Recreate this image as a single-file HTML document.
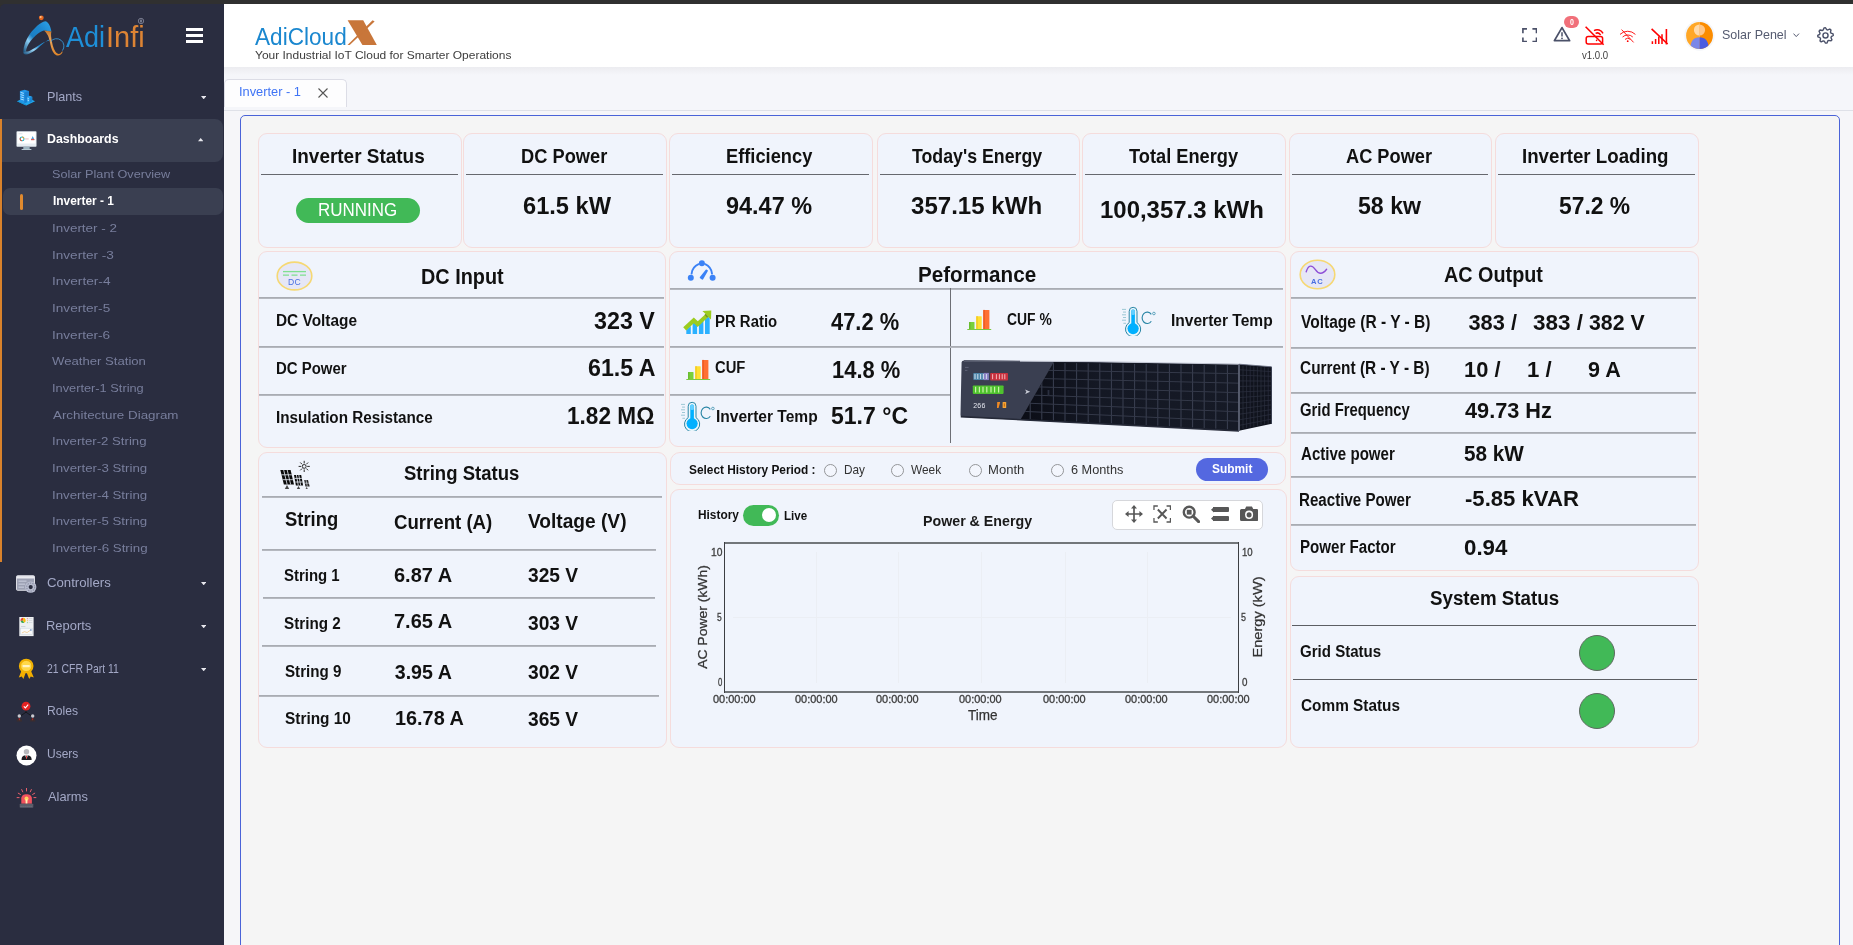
<!DOCTYPE html>
<html lang="en"><head><meta charset="utf-8"><title>Inverter - 1</title><style>html,body{margin:0;padding:0;overflow:hidden}html{width:1853px;height:945px}body{width:1853px;height:945px;overflow:hidden;position:relative;background:#f5f6fa;font-family:"Liberation Sans",sans-serif}
.a{position:absolute;display:block}
.t{position:absolute;white-space:nowrap;line-height:1;font-family:"Liberation Sans",sans-serif;transform-origin:0 0}
</style></head>
<body>
<div class="a" style="left:0;top:0;width:1853px;height:945px;overflow:hidden;will-change:transform">
<div class="a" style="left:0px;top:0px;width:1853px;height:945px;background:#f5f6fa;"></div>
<div class="a" style="left:0px;top:0px;width:1853px;height:4px;background:#303030;"></div>
<div class="a" style="left:224px;top:4px;width:1629px;height:63px;background:#ffffff;"></div>
<div class="a" style="left:224px;top:67px;width:1629px;height:8px;background:linear-gradient(#ececf0,#f5f6fa);"></div>
<div class="a" style="left:224px;top:110px;width:1629px;height:1px;background:#dfe1e8;"></div>
<div class="a" style="left:224px;top:111px;width:1629px;height:834px;background:#f6f6f9;"></div>
<div class="a" style="left:224px;top:79px;width:123px;height:28px;background:#fdfdfe;border:1px solid #dcdde6;box-sizing:border-box;border-radius:5px 5px 0 0;border-bottom:none;"></div>
<span class="t" style="left:239.10px;top:85.70px;font-size:12px;font-weight:400;color:#3f74f5;transform:scaleX(1.0679);">Inverter - 1</span>
<svg class="a" style="left:318px;top:88px;" width="10" height="10" viewBox="0 0 10 10" preserveAspectRatio="none"><path d="M0.5 0.5L9.5 9.5M9.5 0.5L0.5 9.5" stroke="#555" stroke-width="1.1" fill="none"/></svg>
<div class="a" style="left:240px;top:115px;width:1600px;height:845px;background:#f5f5f5;border:1px solid #4a63d8;box-sizing:border-box;border-radius:5px 5px 0 0;"></div>
<div class="a" style="left:0px;top:4px;width:12px;height:8px;background:#303030;"></div>
<div class="a" style="left:0px;top:4px;width:224px;height:941px;background:#2a2d40;border-radius:5px 0 0 0;"></div>
<div class="a" style="left:0px;top:119px;width:2px;height:443px;background:#d9822b;"></div>
<div class="a" style="left:2px;top:119px;width:221px;height:43px;background:#3a3f51;border-radius:0 8px 8px 0;"></div>
<div class="a" style="left:3px;top:188px;width:220px;height:27px;background:#3a3f51;border-radius:7px;"></div>
<div class="a" style="left:20px;top:194px;width:3px;height:16px;background:#e08a2e;border-radius:2px;"></div>
<span class="t" style="left:47.00px;top:92.48px;font-size:11.9px;font-weight:400;color:#a3a8c6;transform:scaleX(1.0625);">Plants</span>
<span class="t" style="left:46.93px;top:132.73px;font-size:12.2px;font-weight:700;color:#ffffff;transform:scaleX(1.0159);">Dashboards</span>
<span class="t" style="left:52.38px;top:168.97px;font-size:11.8px;font-weight:400;color:#787e9c;transform:scaleX(1.0734);">Solar Plant Overview</span>
<span class="t" style="left:52.58px;top:194.80px;font-size:12.0px;font-weight:700;color:#ffffff;transform:scaleX(0.9917);">Inverter - 1</span>
<span class="t" style="left:51.51px;top:222.97px;font-size:11.8px;font-weight:400;color:#787e9c;transform:scaleX(1.1382);">Inverter - 2</span>
<span class="t" style="left:51.76px;top:249.97px;font-size:11.8px;font-weight:400;color:#787e9c;transform:scaleX(1.1500);">Inverter -3</span>
<span class="t" style="left:51.68px;top:275.97px;font-size:11.8px;font-weight:400;color:#787e9c;transform:scaleX(1.1592);">Inverter-4</span>
<span class="t" style="left:51.86px;top:302.97px;font-size:11.8px;font-weight:400;color:#787e9c;transform:scaleX(1.1531);">Inverter-5</span>
<span class="t" style="left:52.07px;top:329.97px;font-size:11.8px;font-weight:400;color:#787e9c;transform:scaleX(1.1510);">Inverter-6</span>
<span class="t" style="left:52.42px;top:355.97px;font-size:11.8px;font-weight:400;color:#787e9c;transform:scaleX(1.1131);">Weather Station</span>
<span class="t" style="left:52.44px;top:382.97px;font-size:11.8px;font-weight:400;color:#787e9c;transform:scaleX(1.0843);">Inverter-1 String</span>
<span class="t" style="left:53.34px;top:409.97px;font-size:11.8px;font-weight:400;color:#787e9c;transform:scaleX(1.1327);">Architecture Diagram</span>
<span class="t" style="left:52.13px;top:435.97px;font-size:11.8px;font-weight:400;color:#787e9c;transform:scaleX(1.1169);">Inverter-2 String</span>
<span class="t" style="left:52.31px;top:462.97px;font-size:11.8px;font-weight:400;color:#787e9c;transform:scaleX(1.1253);">Inverter-3 String</span>
<span class="t" style="left:52.31px;top:489.97px;font-size:11.8px;font-weight:400;color:#787e9c;transform:scaleX(1.1253);">Inverter-4 String</span>
<span class="t" style="left:52.31px;top:515.97px;font-size:11.8px;font-weight:400;color:#787e9c;transform:scaleX(1.1253);">Inverter-5 String</span>
<span class="t" style="left:52.12px;top:542.97px;font-size:11.8px;font-weight:400;color:#787e9c;transform:scaleX(1.1301);">Inverter-6 String</span>
<span class="t" style="left:46.67px;top:578.28px;font-size:11.9px;font-weight:400;color:#a3a8c6;transform:scaleX(1.1089);">Controllers</span>
<span class="t" style="left:46.33px;top:621.28px;font-size:11.9px;font-weight:400;color:#a3a8c6;transform:scaleX(1.0875);">Reports</span>
<span class="t" style="left:47.03px;top:664.28px;font-size:11.9px;font-weight:400;color:#a3a8c6;transform:scaleX(0.8790);">21 CFR Part 11</span>
<span class="t" style="left:46.62px;top:706.28px;font-size:11.9px;font-weight:400;color:#a3a8c6;transform:scaleX(1.0207);">Roles</span>
<span class="t" style="left:47.08px;top:749.28px;font-size:11.9px;font-weight:400;color:#a3a8c6;transform:scaleX(1.0083);">Users</span>
<span class="t" style="left:48.12px;top:792.28px;font-size:11.9px;font-weight:400;color:#a3a8c6;transform:scaleX(1.0811);">Alarms</span>
<svg class="a" style="left:200.6px;top:95.7px;" width="5.4" height="3.3" viewBox="0 0 6 3.5" preserveAspectRatio="none"><path d="M0 0H6L3 3.5Z" fill="#e8e8ee"/></svg>
<svg class="a" style="left:198.0px;top:138.3px;" width="5.4" height="3.3" viewBox="0 0 6 3.5" preserveAspectRatio="none"><path d="M0 3.5H6L3 0Z" fill="#e8e8ee"/></svg>
<svg class="a" style="left:200.6px;top:582.0px;" width="5.4" height="3.3" viewBox="0 0 6 3.5" preserveAspectRatio="none"><path d="M0 0H6L3 3.5Z" fill="#e8e8ee"/></svg>
<svg class="a" style="left:200.6px;top:625.0px;" width="5.4" height="3.3" viewBox="0 0 6 3.5" preserveAspectRatio="none"><path d="M0 0H6L3 3.5Z" fill="#e8e8ee"/></svg>
<svg class="a" style="left:200.6px;top:667.8px;" width="5.4" height="3.3" viewBox="0 0 6 3.5" preserveAspectRatio="none"><path d="M0 0H6L3 3.5Z" fill="#e8e8ee"/></svg>
<div class="a" style="left:186px;top:28px;width:17px;height:3px;background:#ffffff;"></div>
<div class="a" style="left:186px;top:33.8px;width:17px;height:3.0px;background:#ffffff;"></div>
<div class="a" style="left:186px;top:39.5px;width:17px;height:3.0px;background:#ffffff;"></div>
<div class="a" style="left:258px;top:133px;width:204px;height:115px;background:#f0f4fc;border:1px solid #f5dcdc;box-sizing:border-box;border-radius:9px;"></div>
<div class="a" style="left:261px;top:174px;width:197px;height:1px;background:#66686e;"></div>
<span class="t" style="left:292.25px;top:145.74px;font-size:20.6px;font-weight:700;color:#111111;transform:scaleX(0.9201);">Inverter Status</span>
<div class="a" style="left:463px;top:133px;width:204px;height:115px;background:#f0f4fc;border:1px solid #f5dcdc;box-sizing:border-box;border-radius:9px;"></div>
<div class="a" style="left:466px;top:174px;width:197px;height:1px;background:#66686e;"></div>
<span class="t" style="left:520.59px;top:145.74px;font-size:20.6px;font-weight:700;color:#111111;transform:scaleX(0.8870);">DC Power</span>
<span class="t" style="left:523.12px;top:194.43px;font-size:24.2px;font-weight:700;color:#111111;transform:scaleX(0.9764);">61.5 kW</span>
<div class="a" style="left:669px;top:133px;width:204px;height:115px;background:#f0f4fc;border:1px solid #f5dcdc;box-sizing:border-box;border-radius:9px;"></div>
<div class="a" style="left:672px;top:174px;width:197px;height:1px;background:#66686e;"></div>
<span class="t" style="left:725.84px;top:145.74px;font-size:20.6px;font-weight:700;color:#111111;transform:scaleX(0.8870);">Efficiency</span>
<span class="t" style="left:725.77px;top:194.43px;font-size:24.2px;font-weight:700;color:#111111;transform:scaleX(0.9701);">94.47 %</span>
<div class="a" style="left:877px;top:133px;width:203px;height:115px;background:#f0f4fc;border:1px solid #f5dcdc;box-sizing:border-box;border-radius:9px;"></div>
<div class="a" style="left:880px;top:174px;width:196px;height:1px;background:#66686e;"></div>
<span class="t" style="left:911.76px;top:145.74px;font-size:20.6px;font-weight:700;color:#111111;transform:scaleX(0.8619);">Today&#x27;s Energy</span>
<span class="t" style="left:911.09px;top:194.43px;font-size:24.2px;font-weight:700;color:#111111;transform:scaleX(0.9953);">357.15 kWh</span>
<div class="a" style="left:1082px;top:133px;width:204px;height:115px;background:#f0f4fc;border:1px solid #f5dcdc;box-sizing:border-box;border-radius:9px;"></div>
<div class="a" style="left:1085px;top:174px;width:197px;height:1px;background:#66686e;"></div>
<span class="t" style="left:1128.75px;top:145.74px;font-size:20.6px;font-weight:700;color:#111111;transform:scaleX(0.8854);">Total Energy</span>
<span class="t" style="left:1100.20px;top:198.43px;font-size:24.2px;font-weight:700;color:#111111;transform:scaleX(0.9902);">100,357.3 kWh</span>
<div class="a" style="left:1289px;top:133px;width:203px;height:115px;background:#f0f4fc;border:1px solid #f5dcdc;box-sizing:border-box;border-radius:9px;"></div>
<div class="a" style="left:1292px;top:174px;width:196px;height:1px;background:#66686e;"></div>
<span class="t" style="left:1345.74px;top:145.74px;font-size:20.6px;font-weight:700;color:#111111;transform:scaleX(0.8844);">AC Power</span>
<span class="t" style="left:1357.64px;top:194.43px;font-size:24.2px;font-weight:700;color:#111111;transform:scaleX(0.9562);">58 kw</span>
<div class="a" style="left:1495px;top:133px;width:203.5px;height:115px;background:#f0f4fc;border:1px solid #f5dcdc;box-sizing:border-box;border-radius:9px;"></div>
<div class="a" style="left:1498px;top:174px;width:196.5px;height:1px;background:#66686e;"></div>
<span class="t" style="left:1522.11px;top:145.74px;font-size:20.6px;font-weight:700;color:#111111;transform:scaleX(0.9082);">Inverter Loading</span>
<span class="t" style="left:1558.92px;top:194.43px;font-size:24.2px;font-weight:700;color:#111111;transform:scaleX(0.9446);">57.2 %</span>
<div class="a" style="left:296px;top:198px;width:124px;height:25px;background:#41b957;border-radius:13px;"></div>
<span class="t" style="left:318.12px;top:201.44px;font-size:18.6px;font-weight:400;color:#ffffff;transform:scaleX(0.9125);">RUNNING</span>
<div class="a" style="left:258px;top:251px;width:408px;height:196.5px;background:#f0f4fc;border:1px solid #f5dcdc;box-sizing:border-box;border-radius:9px;"></div>
<svg class="a" style="left:276px;top:261px;" width="37" height="30" viewBox="0 0 37 30" preserveAspectRatio="none"><ellipse cx="18.5" cy="15" rx="17.3" ry="13.9" fill="#e6e7f6" stroke="#f6d873" stroke-width="1.6"/>
<path d="M7 10.6H30" stroke="#7fe08f" stroke-width="1.3"/><path d="M7 14.2h6M15.5 14.2h6M24 14.2h6" stroke="#7fe08f" stroke-width="1.3"/>
<text x="18.5" y="24.3" font-family="Liberation Sans" font-size="8.6" font-weight="400" fill="#4a6fe0" text-anchor="middle" letter-spacing="0.4">DC</text></svg>
<span class="t" style="left:420.56px;top:266.04px;font-size:22.6px;font-weight:700;color:#111111;transform:scaleX(0.8780);">DC Input</span>
<div class="a" style="left:259px;top:297px;width:405px;height:2px;background:linear-gradient(#a3a6ad,#bbbec5);"></div>
<span class="t" style="left:275.96px;top:312.46px;font-size:17.4px;font-weight:700;color:#111111;transform:scaleX(0.8850);">DC Voltage</span>
<span class="t" style="left:593.94px;top:308.60px;font-size:24.3px;font-weight:700;color:#111111;transform:scaleX(0.9581);">323 V</span>
<div class="a" style="left:259px;top:346px;width:405px;height:2px;background:linear-gradient(#a3a6ad,#bbbec5);"></div>
<span class="t" style="left:276.12px;top:360.46px;font-size:17.4px;font-weight:700;color:#111111;transform:scaleX(0.8599);">DC Power</span>
<span class="t" style="left:587.59px;top:356.10px;font-size:24.3px;font-weight:700;color:#111111;transform:scaleX(0.9551);">61.5 A</span>
<div class="a" style="left:259px;top:393.5px;width:405px;height:2.0px;background:linear-gradient(#a3a6ad,#bbbec5);"></div>
<span class="t" style="left:275.83px;top:409.46px;font-size:17.4px;font-weight:700;color:#111111;transform:scaleX(0.8766);">Insulation Resistance</span>
<span class="t" style="left:567.29px;top:403.60px;font-size:24.3px;font-weight:700;color:#111111;transform:scaleX(0.9310);">1.82 MΩ</span>
<div class="a" style="left:258px;top:451.5px;width:408.5px;height:296.0px;background:#f0f4fc;border:1px solid #f5dcdc;box-sizing:border-box;border-radius:9px;"></div>
<span class="t" style="left:404.43px;top:462.50px;font-size:20px;font-weight:700;color:#111111;transform:scaleX(0.9260);">String Status</span>
<div class="a" style="left:262px;top:496px;width:400px;height:2px;background:linear-gradient(#a3a6ad,#bbbec5);"></div>
<span class="t" style="left:285.46px;top:509.59px;font-size:19.6px;font-weight:700;color:#111111;transform:scaleX(0.9391);">String</span>
<span class="t" style="left:394.33px;top:512.59px;font-size:19.6px;font-weight:700;color:#111111;transform:scaleX(0.9500);">Current (A)</span>
<span class="t" style="left:527.65px;top:512.34px;font-size:19.6px;font-weight:700;color:#111111;transform:scaleX(0.9765);">Voltage (V)</span>
<div class="a" style="left:262px;top:548.5px;width:394px;height:2.0px;background:linear-gradient(#a3a6ad,#bbbec5);"></div>
<span class="t" style="left:284.18px;top:567.46px;font-size:17.4px;font-weight:700;color:#111111;transform:scaleX(0.8595);">String 1</span>
<span class="t" style="left:394.30px;top:566.09px;font-size:19.6px;font-weight:700;color:#111111;transform:scaleX(1.0209);">6.87 A</span>
<span class="t" style="left:527.50px;top:566.09px;font-size:19.6px;font-weight:700;color:#111111;transform:scaleX(0.9784);">325 V</span>
<span class="t" style="left:284.32px;top:615.46px;font-size:17.4px;font-weight:700;color:#111111;transform:scaleX(0.8754);">String 2</span>
<span class="t" style="left:394.20px;top:611.84px;font-size:19.6px;font-weight:700;color:#111111;transform:scaleX(1.0209);">7.65 A</span>
<span class="t" style="left:527.50px;top:613.84px;font-size:19.6px;font-weight:700;color:#111111;transform:scaleX(0.9784);">303 V</span>
<span class="t" style="left:284.90px;top:663.21px;font-size:17.4px;font-weight:700;color:#111111;transform:scaleX(0.8714);">String 9</span>
<span class="t" style="left:394.79px;top:663.34px;font-size:19.6px;font-weight:700;color:#111111;">3.95 A</span>
<span class="t" style="left:527.50px;top:663.09px;font-size:19.6px;font-weight:700;color:#111111;transform:scaleX(0.9784);">302 V</span>
<span class="t" style="left:285.39px;top:710.46px;font-size:17.4px;font-weight:700;color:#111111;transform:scaleX(0.8856);">String 10</span>
<span class="t" style="left:394.52px;top:709.34px;font-size:19.6px;font-weight:700;color:#111111;transform:scaleX(1.0136);">16.78 A</span>
<span class="t" style="left:527.50px;top:710.09px;font-size:19.6px;font-weight:700;color:#111111;transform:scaleX(0.9784);">365 V</span>
<div class="a" style="left:263px;top:597px;width:392px;height:2px;background:linear-gradient(#a3a6ad,#bbbec5);"></div>
<div class="a" style="left:262px;top:645px;width:394px;height:2px;background:linear-gradient(#a3a6ad,#bbbec5);"></div>
<div class="a" style="left:259px;top:695px;width:400px;height:2px;background:linear-gradient(#a3a6ad,#bbbec5);"></div>
<div class="a" style="left:669px;top:250.5px;width:617px;height:196.0px;background:#f0f4fc;border:1px solid #f5dcdc;box-sizing:border-box;border-radius:9px;"></div>
<span class="t" style="left:917.61px;top:263.79px;font-size:22.6px;font-weight:700;color:#111111;transform:scaleX(0.9133);">Peformance</span>
<div class="a" style="left:670px;top:287.5px;width:613px;height:2.0px;background:linear-gradient(#a3a6ad,#bbbec5);"></div>
<div class="a" style="left:949.5px;top:288px;width:1.0px;height:155px;background:#6d6f75;"></div>
<span class="t" style="left:714.95px;top:313.21px;font-size:17.4px;font-weight:700;color:#111111;transform:scaleX(0.8577);">PR Ratio</span>
<span class="t" style="left:831.44px;top:311.44px;font-size:23.6px;font-weight:700;color:#111111;transform:scaleX(0.9267);">47.2 %</span>
<div class="a" style="left:670px;top:346px;width:613px;height:2px;background:linear-gradient(#a3a6ad,#bbbec5);"></div>
<span class="t" style="left:715.07px;top:359.21px;font-size:17.4px;font-weight:700;color:#111111;transform:scaleX(0.8500);">CUF</span>
<span class="t" style="left:831.89px;top:358.69px;font-size:23.6px;font-weight:700;color:#111111;transform:scaleX(0.9292);">14.8 %</span>
<div class="a" style="left:670px;top:393.5px;width:280px;height:2.0px;background:linear-gradient(#a3a6ad,#bbbec5);"></div>
<span class="t" style="left:715.71px;top:407.71px;font-size:17.4px;font-weight:700;color:#111111;transform:scaleX(0.8942);">Inverter Temp</span>
<span class="t" style="left:830.60px;top:404.69px;font-size:23.6px;font-weight:700;color:#111111;transform:scaleX(0.9760);">51.7 °C</span>
<span class="t" style="left:1006.75px;top:311.21px;font-size:17.4px;font-weight:700;color:#111111;transform:scaleX(0.7982);">CUF %</span>
<span class="t" style="left:1170.96px;top:312.46px;font-size:17.4px;font-weight:700;color:#111111;transform:scaleX(0.8942);">Inverter Temp</span>
<div class="a" style="left:1289.5px;top:250.5px;width:409.0px;height:320.5px;background:#f0f4fc;border:1px solid #f5dcdc;box-sizing:border-box;border-radius:9px;"></div>
<span class="t" style="left:1444.19px;top:263.79px;font-size:22.6px;font-weight:700;color:#111111;transform:scaleX(0.8763);">AC Output</span>
<div class="a" style="left:1290.5px;top:297px;width:405.0px;height:2px;background:linear-gradient(#a3a6ad,#bbbec5);"></div>
<span class="t" style="left:1300.98px;top:313.54px;font-size:17.6px;font-weight:700;color:#111111;transform:scaleX(0.8829);">Voltage (R - Y - B)</span>
<span class="t" style="left:1468.46px;top:311.97px;font-size:21.8px;font-weight:700;color:#111111;">383 /</span>
<span class="t" style="left:1533.08px;top:311.97px;font-size:21.8px;font-weight:700;color:#111111;transform:scaleX(1.0298);">383 /</span>
<span class="t" style="left:1588.75px;top:311.97px;font-size:21.8px;font-weight:700;color:#111111;transform:scaleX(0.9759);">382 V</span>
<div class="a" style="left:1290.5px;top:347px;width:405.0px;height:2px;background:linear-gradient(#a3a6ad,#bbbec5);"></div>
<span class="t" style="left:1299.93px;top:359.79px;font-size:17.6px;font-weight:700;color:#111111;transform:scaleX(0.8760);">Current (R - Y - B)</span>
<span class="t" style="left:1464.47px;top:359.22px;font-size:21.8px;font-weight:700;color:#111111;transform:scaleX(1.0043);">10 /</span>
<span class="t" style="left:1527.12px;top:359.22px;font-size:21.8px;font-weight:700;color:#111111;transform:scaleX(1.0174);">1 /</span>
<span class="t" style="left:1588.10px;top:359.22px;font-size:21.8px;font-weight:700;color:#111111;transform:scaleX(0.9887);">9 A</span>
<div class="a" style="left:1290.5px;top:392px;width:405.0px;height:2px;background:linear-gradient(#a3a6ad,#bbbec5);"></div>
<span class="t" style="left:1300.33px;top:401.54px;font-size:17.6px;font-weight:700;color:#111111;transform:scaleX(0.8442);">Grid Frequency</span>
<span class="t" style="left:1464.86px;top:399.97px;font-size:21.8px;font-weight:700;color:#111111;transform:scaleX(0.9959);">49.73 Hz</span>
<div class="a" style="left:1290.5px;top:432px;width:405.0px;height:2px;background:linear-gradient(#a3a6ad,#bbbec5);"></div>
<span class="t" style="left:1300.69px;top:445.54px;font-size:17.6px;font-weight:700;color:#111111;transform:scaleX(0.8569);">Active power</span>
<span class="t" style="left:1463.91px;top:442.72px;font-size:21.8px;font-weight:700;color:#111111;transform:scaleX(0.9500);">58 kW</span>
<div class="a" style="left:1290.5px;top:475.5px;width:405.0px;height:2.0px;background:linear-gradient(#a3a6ad,#bbbec5);"></div>
<span class="t" style="left:1299.26px;top:491.54px;font-size:17.6px;font-weight:700;color:#111111;transform:scaleX(0.8597);">Reactive Power</span>
<span class="t" style="left:1464.52px;top:487.97px;font-size:21.8px;font-weight:700;color:#111111;transform:scaleX(1.0149);">-5.85 kVAR</span>
<div class="a" style="left:1290.5px;top:523.5px;width:405.0px;height:2.0px;background:linear-gradient(#a3a6ad,#bbbec5);"></div>
<span class="t" style="left:1300.05px;top:539.29px;font-size:17.6px;font-weight:700;color:#111111;transform:scaleX(0.8582);">Power Factor</span>
<span class="t" style="left:1464.02px;top:537.47px;font-size:21.8px;font-weight:700;color:#111111;transform:scaleX(1.0220);">0.94</span>
<div class="a" style="left:1290px;top:576px;width:409px;height:172px;background:#f0f4fc;border:1px solid #f5dcdc;box-sizing:border-box;border-radius:9px;"></div>
<span class="t" style="left:1430.04px;top:589.34px;font-size:19.6px;font-weight:700;color:#111111;transform:scaleX(0.9560);">System Status</span>
<div class="a" style="left:1292px;top:625px;width:403.5px;height:1px;background:#5c5e63;"></div>
<span class="t" style="left:1300.12px;top:643.01px;font-size:17.4px;font-weight:700;color:#111111;transform:scaleX(0.8658);">Grid Status</span>
<div class="a" style="left:1578.6px;top:635px;width:36.0px;height:36px;background:#41b957;border:1px solid #5d6a60;box-sizing:border-box;border-radius:50%;"></div>
<div class="a" style="left:1293px;top:679px;width:404px;height:1px;background:#5c5e63;"></div>
<span class="t" style="left:1300.71px;top:697.46px;font-size:17.4px;font-weight:700;color:#111111;transform:scaleX(0.8832);">Comm Status</span>
<div class="a" style="left:1578.6px;top:693px;width:36.0px;height:36px;background:#41b957;border:1px solid #5d6a60;box-sizing:border-box;border-radius:50%;"></div>
<div class="a" style="left:670px;top:452px;width:615.5px;height:33px;background:#f0f4fc;border:1px solid #f5dcdc;box-sizing:border-box;border-radius:10px;"></div>
<span class="t" style="left:689.45px;top:463.36px;font-size:13.4px;font-weight:700;color:#111111;transform:scaleX(0.8858);">Select History Period :</span>
<div class="a" style="left:823.8px;top:463.75px;width:13.0px;height:13.0px;background:#f3f6fd;border:1px solid #949699;box-sizing:border-box;border-radius:50%;"></div>
<span class="t" style="left:843.68px;top:462.53px;font-size:13.2px;font-weight:400;color:#333;transform:scaleX(0.8932);">Day</span>
<div class="a" style="left:890.5px;top:463.75px;width:13.0px;height:13.0px;background:#f3f6fd;border:1px solid #949699;box-sizing:border-box;border-radius:50%;"></div>
<span class="t" style="left:911.33px;top:462.53px;font-size:13.2px;font-weight:400;color:#333;transform:scaleX(0.8985);">Week</span>
<div class="a" style="left:968.5px;top:463.75px;width:13.0px;height:13.0px;background:#f3f6fd;border:1px solid #949699;box-sizing:border-box;border-radius:50%;"></div>
<span class="t" style="left:988.39px;top:462.53px;font-size:13.2px;font-weight:400;color:#333;transform:scaleX(0.9900);">Month</span>
<div class="a" style="left:1050.5px;top:463.75px;width:13.0px;height:13.0px;background:#f3f6fd;border:1px solid #949699;box-sizing:border-box;border-radius:50%;"></div>
<span class="t" style="left:1071.09px;top:462.53px;font-size:13.2px;font-weight:400;color:#333;transform:scaleX(0.9651);">6 Months</span>
<div class="a" style="left:1196.25px;top:457.5px;width:72.0px;height:23.0px;background:#5468e0;border-radius:12px;"></div>
<span class="t" style="left:1211.51px;top:461.86px;font-size:13.4px;font-weight:700;color:#ffffff;transform:scaleX(0.8898);">Submit</span>
<div class="a" style="left:670px;top:488.5px;width:617px;height:259.0px;background:#f0f4fc;border:1px solid #f5dcdc;box-sizing:border-box;border-radius:9px;"></div>
<span class="t" style="left:698.26px;top:507.86px;font-size:13.4px;font-weight:700;color:#111111;transform:scaleX(0.8867);">History</span>
<div class="a" style="left:743.25px;top:504.5px;width:36.0px;height:21.0px;background:#41b957;border-radius:11px;"></div>
<div class="a" style="left:761.5px;top:508px;width:14.0px;height:14px;background:#ffffff;border-radius:50%;"></div>
<span class="t" style="left:783.94px;top:508.61px;font-size:13.4px;font-weight:700;color:#111111;transform:scaleX(0.8660);">Live</span>
<span class="t" style="left:922.63px;top:513.84px;font-size:14.6px;font-weight:700;color:#1a1a1a;transform:scaleX(0.9743);">Power &amp; Energy</span>
<div class="a" style="left:1112px;top:500px;width:151px;height:29.5px;background:#ffffff;border:1px solid #d6d7db;box-sizing:border-box;border-radius:5px;"></div>
<svg class="a" style="left:1124.6px;top:504.6px;" width="18" height="18" viewBox="0 0 18 18" preserveAspectRatio="none"><path d="M9 1.2V16.8M1.2 9H16.8" stroke="#575757" stroke-width="1.7" fill="none"/><path d="M9 0L12 3.6H6ZM9 18L12 14.4H6ZM0 9L3.6 6V12ZM18 9L14.4 6V12Z" fill="#575757"/></svg>
<svg class="a" style="left:1152.6px;top:504.6px;" width="18.4" height="18" viewBox="0 0 19 18" preserveAspectRatio="none"><path d="M1 5V1H5M14 1H18V5M18 13V17H14M5 17H1V13" stroke="#575757" stroke-width="1.3" fill="none"/><path d="M5 4.5L14 13.5M14 4.5L5 13.5" stroke="#575757" stroke-width="2" fill="none"/></svg>
<svg class="a" style="left:1181.6px;top:504.6px;" width="18" height="18" viewBox="0 0 18 18" preserveAspectRatio="none"><circle cx="7.2" cy="7.2" r="5.4" stroke="#575757" stroke-width="2.4" fill="none"/><path d="M11.2 11.2L16.6 16.6" stroke="#575757" stroke-width="3" stroke-linecap="round"/><rect x="4.8" y="4.8" width="4.8" height="4.8" fill="#575757"/></svg>
<div class="a" style="left:1212.5px;top:506.8px;width:16.299999999999955px;height:5.499999999999943px;background:#575757;border-radius:0 1px 1px 0;"></div>
<div class="a" style="left:1212.5px;top:515.5px;width:16.299999999999955px;height:5.5px;background:#575757;border-radius:0 1px 1px 0;"></div>
<svg class="a" style="left:1210.5px;top:506.8px;" width="3" height="15" viewBox="0 0 3 15" preserveAspectRatio="none"><path d="M3 0L0 2.75L3 5.5ZM3 8.7L0 11.45L3 14.2Z" fill="#575757"/></svg>
<svg class="a" style="left:1240px;top:506.4px;" width="18.2" height="15" viewBox="0 0 19 15" preserveAspectRatio="none"><path d="M1.5 3H5.2L6.5 0.6H12.5L13.8 3H17.5Q19 3 19 4.5V13.5Q19 15 17.5 15H1.5Q0 15 0 13.5V4.5Q0 3 1.5 3Z" fill="#575757"/><circle cx="9.5" cy="8.8" r="4.2" fill="#fff"/><circle cx="9.5" cy="8.8" r="2.6" fill="#575757"/></svg>
<div class="a" style="left:724px;top:542px;width:515px;height:2px;background:#72767a;"></div>
<div class="a" style="left:724px;top:691px;width:515px;height:2px;background:#72767a;"></div>
<div class="a" style="left:724px;top:542px;width:1px;height:151px;background:#3c3e42;"></div>
<div class="a" style="left:1238px;top:542px;width:1px;height:151px;background:#3c3e42;"></div>
<div class="a" style="left:815.5px;top:552px;width:1.0px;height:131px;background:#ebeef4;"></div>
<div class="a" style="left:898px;top:552px;width:1px;height:131px;background:#ebeef4;"></div>
<div class="a" style="left:981px;top:552px;width:1px;height:131px;background:#ebeef4;"></div>
<div class="a" style="left:1064.5px;top:552px;width:1.0px;height:131px;background:#ebeef4;"></div>
<div class="a" style="left:1147px;top:552px;width:1px;height:131px;background:#ebeef4;"></div>
<div class="a" style="left:733px;top:617px;width:498px;height:1px;background:#ebeef4;"></div>
<span class="t" style="left:711.11px;top:546.74px;font-size:10.9px;font-weight:400;color:#3c3c3c;transform:scaleX(0.9455);-webkit-text-stroke:.3px #3c3c3c;">10</span>
<span class="t" style="left:717.25px;top:611.74px;font-size:10.9px;font-weight:400;color:#3c3c3c;transform:scaleX(0.7800);-webkit-text-stroke:.3px #3c3c3c;">5</span>
<span class="t" style="left:717.64px;top:676.74px;font-size:10.9px;font-weight:400;color:#3c3c3c;transform:scaleX(0.7167);-webkit-text-stroke:.3px #3c3c3c;">0</span>
<span class="t" style="left:1241.63px;top:546.74px;font-size:10.9px;font-weight:400;color:#3c3c3c;transform:scaleX(0.8818);-webkit-text-stroke:.3px #3c3c3c;">10</span>
<span class="t" style="left:1241.39px;top:611.74px;font-size:10.9px;font-weight:400;color:#3c3c3c;transform:scaleX(0.8200);-webkit-text-stroke:.3px #3c3c3c;">5</span>
<span class="t" style="left:1241.56px;top:676.74px;font-size:10.9px;font-weight:400;color:#3c3c3c;transform:scaleX(0.9000);-webkit-text-stroke:.3px #3c3c3c;">0</span>
<span class="t" style="left:712.59px;top:693.74px;font-size:10.9px;font-weight:400;color:#3c3c3c;transform:scaleX(1.0048);-webkit-text-stroke:.3px #3c3c3c;">00:00:00</span>
<span class="t" style="left:794.54px;top:693.74px;font-size:10.9px;font-weight:400;color:#3c3c3c;transform:scaleX(1.0048);-webkit-text-stroke:.3px #3c3c3c;">00:00:00</span>
<span class="t" style="left:876.29px;top:693.74px;font-size:10.9px;font-weight:400;color:#3c3c3c;transform:scaleX(1.0048);-webkit-text-stroke:.3px #3c3c3c;">00:00:00</span>
<span class="t" style="left:958.79px;top:693.74px;font-size:10.9px;font-weight:400;color:#3c3c3c;transform:scaleX(1.0048);-webkit-text-stroke:.3px #3c3c3c;">00:00:00</span>
<span class="t" style="left:1042.59px;top:693.74px;font-size:10.9px;font-weight:400;color:#3c3c3c;transform:scaleX(1.0048);-webkit-text-stroke:.3px #3c3c3c;">00:00:00</span>
<span class="t" style="left:1125.09px;top:693.74px;font-size:10.9px;font-weight:400;color:#3c3c3c;transform:scaleX(1.0048);-webkit-text-stroke:.3px #3c3c3c;">00:00:00</span>
<span class="t" style="left:1207.29px;top:693.74px;font-size:10.9px;font-weight:400;color:#3c3c3c;transform:scaleX(1.0048);-webkit-text-stroke:.3px #3c3c3c;">00:00:00</span>
<span class="t" style="left:968.21px;top:709.27px;font-size:13.8px;font-weight:400;color:#333;transform:scaleX(0.9800);-webkit-text-stroke:.25px #333;">Time</span>
<span class="t" style="left:702.6px;top:617.25px;font-size:13.4px;font-weight:400;color:#333;transform-origin:50% 50%;transform:translate(-50%,-50%) rotate(-90deg) scaleX(1.0404);-webkit-text-stroke:.25px #333;">AC Power (kWh)</span>
<span class="t" style="left:1257.75px;top:617.25px;font-size:13.4px;font-weight:400;color:#333;transform-origin:50% 50%;transform:translate(-50%,-50%) rotate(-90deg) scaleX(1.0890);-webkit-text-stroke:.25px #333;">Energy (kW)</span>
<svg class="a" style="left:18px;top:12px;" width="52" height="48" viewBox="18 12 52 48" preserveAspectRatio="none">
<defs>
<linearGradient id="lgb" x1="0" y1="1" x2="1" y2="0"><stop offset="0" stop-color="#14507e"/><stop offset=".28" stop-color="#8fd0f5"/><stop offset=".42" stop-color="#1b7fc4"/><stop offset=".7" stop-color="#1e88d0"/><stop offset="1" stop-color="#2fa4e8"/></linearGradient>
<linearGradient id="lgo" x1="0" y1="0" x2="0" y2="1"><stop offset="0" stop-color="#c9782c"/><stop offset=".35" stop-color="#e9a35a"/><stop offset="1" stop-color="#e08427"/></linearGradient>
<linearGradient id="lgl" x1="0" y1="1" x2="1" y2="0"><stop offset="0" stop-color="#134a78"/><stop offset=".35" stop-color="#9bd6f7"/><stop offset=".6" stop-color="#1f86cc"/><stop offset="1" stop-color="#2a96da"/></linearGradient>
</defs>
<path d="M23.2 52.6C23.4 46 26 39.5 30 33.8C34.5 27.5 40.5 22.3 45.2 21.2C48.2 21.6 50.6 26 51.4 31.5L44 30.5C40 31.5 35 35.5 30.6 41C27.8 44.7 26.2 48.6 26 51.2Z" fill="url(#lgb)"/>
<path d="M23.2 52.6C23.6 55 26.4 54.9 29.6 53.6C34.6 51.4 39.4 46.4 43.2 43.4C45.6 41.4 47.8 40.2 49.6 39.5L48.8 40.8C46.4 41.2 44 42.2 41.7 43.6C37.4 46 33.6 49.4 29.4 50.9C27.2 51.6 25.8 51.4 26 51.2Z" fill="url(#lgl)"/>
<path d="M44 30.5L51.4 31.5C50.6 34 51.2 38 52 42C53 47 54.6 51.6 57.4 53.6C59.4 54.6 61.2 53.2 62.1 51.2L62.6 52C61.6 54.6 59.2 56.2 56.8 55.4C53.4 54 51.6 49.6 50.4 44.4C49.4 39.6 48.6 34.4 44 30.5Z" fill="url(#lgo)"/>
<path d="M50.6 41.6A6.2 6.2 0 1 1 62.4 50.6" fill="none" stroke="#3aa2e4" stroke-width=".8"/>
<circle cx="41.3" cy="17.8" r="2.4" fill="#e8671e"/><circle cx="40.7" cy="17.1" r="1" fill="#ffc48a"/>
</svg>
<span class="t" style="left:66.29px;top:23.08px;font-size:29.2px;font-weight:400;color:#1e8fd8;transform:scaleX(0.9250);">Adi</span>
<span class="t" style="left:105.64px;top:23.08px;font-size:29.2px;font-weight:400;color:#dd8434;transform:scaleX(0.9912);">Infi</span>
<svg class="a" style="left:136.8px;top:17.2px;" width="8" height="8" viewBox="0 0 8 8" preserveAspectRatio="none"><circle cx="4" cy="4" r="2.7" fill="none" stroke="#a9adbf" stroke-width=".6"/><rect x="3.2" y="3" width="1.6" height="2" fill="none" stroke="#a9adbf" stroke-width=".5"/></svg>
<span class="t" style="left:255.15px;top:26.25px;font-size:23.0px;font-weight:400;color:#1a87cf;transform:scaleX(0.9826);">AdiCloud</span>
<svg class="a" style="left:347px;top:19.5px;" width="31" height="25.5" viewBox="0 0 31 25.5" preserveAspectRatio="none"><path d="M0.6 0.2H16.2L30 25.3H15.6Z" fill="#c8763a"/><path d="M25.6 0.2L27.6 1.4L2.4 25.3H0.2Z" fill="#c8763a"/></svg>
<span class="t" style="left:254.81px;top:50.39px;font-size:11.3px;font-weight:400;color:#3d3d3d;transform:scaleX(1.0606);">Your Industrial IoT Cloud for Smarter Operations</span>
<svg class="a" style="left:1521.6px;top:27.8px;" width="15.4" height="14.6" viewBox="0 0 17 15.5" preserveAspectRatio="none"><path d="M1 5.5V1H5.5M11.5 1H16V5.5M16 10V14.5H11.5M5.5 14.5H1V10" fill="none" stroke="#4b5169" stroke-width="1.8"/></svg>
<svg class="a" style="left:1552.5px;top:25.5px;" width="18" height="16" viewBox="0 0 18 16" preserveAspectRatio="none"><path d="M9 1.6L16.6 14.6H1.4Z" fill="none" stroke="#4b5169" stroke-width="1.8" stroke-linejoin="round"/><path d="M9 6.2V10.4" stroke="#4b5169" stroke-width="1.5"/><circle cx="9" cy="12.3" r=".9" fill="#4b5169"/></svg>
<div class="a" style="left:1564px;top:16px;width:15px;height:12px;background:#f1707a;border-radius:6px;"></div>
<span class="t" style="left:1569.99px;top:17.65px;font-size:9px;font-weight:700;color:#ffffff;transform:scaleX(0.7800);">0</span>
<svg class="a" style="left:1585px;top:26px;" width="20" height="19.5" viewBox="0 0 20 19.5" preserveAspectRatio="none"><rect x="1.2" y="10.6" width="16.4" height="7.4" rx="2" fill="none" stroke="#ff0000" stroke-width="1.5"/>
<path d="M9 4.6A6.4 6.4 0 0 1 18 7.4M10.6 7.4A3.8 3.8 0 0 1 15.6 9" fill="none" stroke="#ff0000" stroke-width="1.5"/>
<circle cx="11.6" cy="14.4" r=".8" fill="#ff0000"/><path d="M0.6 0.8L18.6 18.8" stroke="#ff0000" stroke-width="1.6"/></svg>
<span class="t" style="left:1582.21px;top:50.08px;font-size:11.2px;font-weight:400;color:#3d3d3d;transform:scaleX(0.8600);">v1.0.0</span>
<svg class="a" style="left:1619px;top:29px;" width="17.5" height="14" viewBox="0 0 17.5 14" preserveAspectRatio="none"><path d="M1 5.4A11 11 0 0 1 16.4 5.4M3.6 8A7.4 7.4 0 0 1 13.8 8M6 10.4A4 4 0 0 1 11.4 10.4" fill="none" stroke="#ff0000" stroke-width=".9"/>
<circle cx="8.7" cy="12.2" r=".9" fill="#ff0000"/><path d="M2.6 0.6L14.6 13.4" stroke="#ff0000" stroke-width=".9"/></svg>
<svg class="a" style="left:1651px;top:27.5px;" width="17.5" height="17" viewBox="0 0 17.5 17" preserveAspectRatio="none"><path d="M1.4 16V13.2M4.6 16V11M7.8 16V8.6M11 16V6.2" stroke="#ff0000" stroke-width="1.5"/><path d="M15.4 16.4V1" stroke="#ff0000" stroke-width="1.6"/>
<path d="M0.6 0.8L16.6 16" stroke="#ff0000" stroke-width="1.6"/></svg>
<svg class="a" style="left:1683.5px;top:19.5px;" width="31" height="31" viewBox="0 0 31 31" preserveAspectRatio="none"><defs><clipPath id="avc"><circle cx="15.5" cy="15.5" r="13.4"/></clipPath></defs>
<circle cx="15.5" cy="15.5" r="15.2" fill="#f4f6fa"/>
<g clip-path="url(#avc)"><rect x="0" y="0" width="15.5" height="31" fill="#ffa726"/><rect x="15.5" y="0" width="15.5" height="31" fill="#fb8c00"/>
<path d="M15.5 4.4A5.6 5.6 0 0 0 15.5 15.6Z" fill="#ffd9a8"/><path d="M15.5 4.4A5.6 5.6 0 0 1 15.5 15.6Z" fill="#ffc687"/>
<path d="M15.5 17.2C9.5 17.2 6.4 21 6 29.5H15.5Z" fill="#7986e8"/><path d="M15.5 17.2C21.5 17.2 24.6 21 25 29.5H15.5Z" fill="#4a5be0"/></g></svg>
<span class="t" style="left:1721.93px;top:28.56px;font-size:12.4px;font-weight:400;color:#555b70;transform:scaleX(1.0081);">Solar Penel</span>
<svg class="a" style="left:1793px;top:33px;" width="6.5" height="4.5" viewBox="0 0 6.5 4.5" preserveAspectRatio="none"><path d="M0.5 0.6L3.25 3.6L6 0.6" fill="none" stroke="#555b70" stroke-width="1"/></svg>
<svg class="a" style="left:1817px;top:27.3px;" width="17" height="16.9" viewBox="0 0 18 18" preserveAspectRatio="none"><path d="M17.04 7.40L17.20 9.00L15.18 10.23L14.82 11.41L15.82 13.56L14.80 14.80L12.50 14.24L11.41 14.82L10.60 17.04L9.00 17.20L7.77 15.18L6.59 14.82L4.44 15.82L3.20 14.80L3.76 12.50L3.18 11.41L0.96 10.60L0.80 9.00L2.82 7.77L3.18 6.59L2.18 4.44L3.20 3.20L5.50 3.76L6.59 3.18L7.40 0.96L9.00 0.80L10.23 2.82L11.41 3.18L13.56 2.18L14.80 3.20L14.24 5.50L14.82 6.59Z" fill="none" stroke="#4b5169" stroke-width="1.5" stroke-linejoin="round"/><circle cx="9" cy="9" r="2.7" fill="none" stroke="#4b5169" stroke-width="1.5"/></svg>
<svg class="a" style="left:16px;top:89px;" width="20" height="17" viewBox="16 89 20 17" preserveAspectRatio="none"><path d="M16.9 101.2L26.2 97.2L35.1 101.2L26.2 105.4Z" fill="#21a9ee"/>
<path d="M16.9 101.2L26.2 105.4V104.2L19 101.2Z" fill="#1690d4"/>
<path d="M19.9 91L24.6 89.7L28.8 91V101.6L24.4 103.2L19.9 101.4Z" fill="#2196e8"/>
<path d="M24.4 92.4L28.8 91V101.6L24.4 103.2Z" fill="#1a7fd0"/>
<path d="M20.6 92.4L23.8 93.4M20.6 94.6L23.8 95.6M20.6 96.8L23.8 97.8M20.6 99L23.8 100" stroke="#bfe6ff" stroke-width=".9"/>
<path d="M27 97L29.8 95.8L32.2 96.8V101.6L29.6 102.8L27 101.8Z" fill="#2ba4f2"/>
<path d="M29.6 97.8L32.2 96.8V101.6L29.6 102.8Z" fill="#1787d6"/>
<path d="M27.6 98.4L29 99M27.6 100.2L29 100.8" stroke="#cfeaff" stroke-width=".8"/></svg>
<svg class="a" style="left:15.5px;top:130.5px;" width="21" height="19.5" viewBox="15.5 130.5 21 19.5" preserveAspectRatio="none"><rect x="16" y="130.8" width="20" height="15.4" rx=".8" fill="#e6edf2"/>
<rect x="16.9" y="131.6" width="18.2" height="11.4" fill="#ffffff"/>
<rect x="22.8" y="146.2" width="6.4" height="2.4" fill="#9db4c0"/><rect x="21" y="148.4" width="10" height="1.2" rx=".5" fill="#b7c8d2"/>
<circle cx="21.6" cy="138.4" r="1.9" fill="none" stroke="#26b5c9" stroke-width="1.1"/><path d="M21.6 140.3A1.9 1.9 0 0 1 19.8 137.6" fill="none" stroke="#e8503a" stroke-width="1.1"/>
<path d="M23.4 137.8A1.9 1.9 0 0 0 21.6 136.5" fill="none" stroke="#f4a62a" stroke-width="1.1"/>
<rect x="24.6" y="137.6" width="3.6" height="1.6" fill="#f3d6d6"/>
<path d="M30.4 139.6L32.2 135.6L34 139.6Z" fill="#4aa3df"/><rect x="30.6" y="138.4" width="3.2" height="1.3" fill="#e2574c"/>
<rect x="18" y="133" width="4" height=".7" fill="#d0d6da"/></svg>
<svg class="a" style="left:15.5px;top:574.5px;" width="21" height="19" viewBox="15.5 574.5 21 19" preserveAspectRatio="none"><rect x="16" y="575.2" width="18" height="14.6" rx="1" fill="#9da1b4" stroke="#e9eaf0" stroke-width=".9"/>
<rect x="16.4" y="575.6" width="17.2" height="2.4" fill="#e9eaf0"/>
<rect x="18" y="580" width="8" height="1.4" fill="#bfc3d3"/><rect x="18" y="583" width="6.5" height="1.4" fill="#bfc3d3"/><rect x="18" y="586" width="5.5" height="1.4" fill="#bfc3d3"/>
<circle cx="30.2" cy="586.6" r="5.7" fill="#b9bdd0"/><circle cx="30.2" cy="586.6" r="4" fill="none" stroke="#8f93a8" stroke-width="1.2" stroke-dasharray="1.4 1.1"/>
<circle cx="30.2" cy="586.6" r="2.1" fill="#2a2d40"/></svg>
<svg class="a" style="left:18.5px;top:616px;" width="15" height="20.5" viewBox="18.5 616 15 20.5" preserveAspectRatio="none"><rect x="18.8" y="617" width="14.3" height="19.1" fill="#eef0f2"/>
<path d="M22.6 620.4V617.8A2.6 2.6 0 0 0 20.1 621Z" fill="#ea4335"/><path d="M22.6 620.4L20.1 621A2.6 2.6 0 0 0 23.6 622.8Z" fill="#34a853"/><path d="M22.6 620.4L23.6 622.8A2.6 2.6 0 0 0 22.6 617.8Z" fill="#fbbc05"/>
<rect x="26.4" y="618" width="1.2" height="1.2" fill="#e9a0a0"/><rect x="26.4" y="620" width="1.2" height="1.2" fill="#f2d27a"/><rect x="26.4" y="622" width="1.2" height="1.2" fill="#9fd6a8"/>
<rect x="28.4" y="618.2" width="3.4" height=".8" fill="#d5d8dc"/><rect x="28.4" y="620.2" width="3.4" height=".8" fill="#d5d8dc"/><rect x="28.4" y="622.2" width="3.4" height=".8" fill="#d5d8dc"/>
<rect x="20.4" y="626" width="4.5" height=".8" fill="#c9ccd2"/>
<rect x="20.2" y="628.2" width="11.6" height="6" fill="#f8f9fa" stroke="#c7d0da" stroke-width=".5"/>
<path d="M21.4 633L24 631.6L26.6 632.6L30.6 629.6" fill="none" stroke="#f0c27a" stroke-width=".7"/><circle cx="30.4" cy="630" r=".8" fill="#4a7fd0"/></svg>
<svg class="a" style="left:18px;top:658px;" width="17" height="21.5" viewBox="18 658 17 21.5" preserveAspectRatio="none"><path d="M21.6 670.6L18.8 677.4L21.8 676.6L23.4 679L26 672Z" fill="#f3ae00"/><path d="M30.8 670.6L33.8 677.4L30.8 676.6L29.2 679L26.4 672Z" fill="#f3ae00"/>
<circle cx="26.2" cy="666" r="7.3" fill="#f5b400"/><circle cx="26.2" cy="666" r="5.6" fill="#ffd84a" stroke="#e7a400" stroke-width=".7"/>
<rect x="22.6" y="664.9" width="7.2" height="2.3" rx=".6" fill="#fff3c4"/></svg>
<svg class="a" style="left:16px;top:701px;" width="20" height="22" viewBox="16 701 20 22" preserveAspectRatio="none"><path d="M26 710.4V713M26 712.2L20.4 716M26 712.2L31.6 716" stroke="#15161c" stroke-width=".9" fill="none"/>
<circle cx="26" cy="706.2" r="4.4" fill="#e32222"/><path d="M23.8 706.3L25.4 707.9L28.2 704.6" fill="none" stroke="#fff" stroke-width="1.1"/>
<circle cx="19.3" cy="716" r="1.7" fill="#c9c9cf"/><path d="M16.6 721.4C16.6 718.6 18 718.2 19.3 718.2C20.6 718.2 22 718.6 22 721.4Z" fill="#3a2d2f"/><path d="M18.6 718.4H20L19.3 720.6Z" fill="#e32222"/>
<circle cx="32.7" cy="716" r="1.7" fill="#c9c9cf"/><path d="M30 721.4C30 718.6 31.4 718.2 32.7 718.2C34 718.2 35.4 718.6 35.4 721.4Z" fill="#3a2d2f"/><path d="M32 718.4H33.4L32.7 720.6Z" fill="#e32222"/></svg>
<svg class="a" style="left:15.5px;top:744.5px;" width="21" height="21" viewBox="15.5 744.5 21 21" preserveAspectRatio="none"><circle cx="26" cy="755" r="10" fill="#ffffff"/><circle cx="26" cy="751.2" r="2.7" fill="#b9b9bd"/>
<path d="M21.1 759.4C21.1 755.6 23 754.8 26 754.8C29 754.8 31.1 755.6 31.1 759.4Z" fill="#1d1d22"/><path d="M24.6 754.8H27.4L26 758.4Z" fill="#ffffff"/><path d="M25.5 755.2H26.5L26.3 758L26 758.6L25.7 758Z" fill="#e32222"/></svg>
<svg class="a" style="left:15.5px;top:787px;" width="21" height="21.5" viewBox="15.5 787 21 21.5" preserveAspectRatio="none"><path d="M20.8 803.8V798.6C20.8 795.6 23 794.2 26 794.2C29 794.2 31.4 795.6 31.4 798.6V803.8Z" fill="#f0525e"/>
<ellipse cx="26" cy="798.6" rx="2" ry="2.2" fill="#ffd25e"/><rect x="25.1" y="799.4" width="1.8" height="4.2" fill="#fff1b8"/>
<rect x="19.2" y="803.8" width="13.6" height="4" rx=".8" fill="#595c69"/><path d="M20 806.6H32" stroke="#7b7e8c" stroke-width=".6" stroke-dasharray="1.2 .8"/>
<path d="M26 788V791.4M21 789.2L22.4 792.2M31 789.2L29.6 792.2M17.4 793L20.2 794.6M34.6 793L31.8 794.6M16.2 797.6H19M35.8 797.6H33" stroke="#e8606c" stroke-width="1" fill="none"/></svg>
<svg class="a" style="left:686px;top:259px;" width="30" height="23" viewBox="686 259 30 23" preserveAspectRatio="none"><path d="M691.6 273.6A11.8 11.8 0 0 1 698.6 264.2M705.2 264.2A11.8 11.8 0 0 1 712 273.6" fill="none" stroke="#3b82f6" stroke-width="1.9" stroke-linecap="round"/>
<circle cx="701.9" cy="263.3" r="3" fill="#3b82f6"/><circle cx="690.8" cy="277.7" r="3" fill="#3b82f6"/><circle cx="712.6" cy="277.7" r="3" fill="#3b82f6"/>
<path d="M700.6 277.6L706.4 270.4L707 270.8L702.4 278.8Z" fill="#3b82f6" stroke="#3b82f6" stroke-width="1.7" stroke-linejoin="round"/></svg>
<svg class="a" style="left:682px;top:309px;" width="31" height="27" viewBox="682 309 31 27" preserveAspectRatio="none"><path d="M686.3 334.1V330L690.8 326V334.1ZM692.6 334.1V322.2L694.4 320.4L697.1 323V334.1ZM698.9 334.1V324.6L703.4 320.4V334.1ZM705 334.1V319L709.7 316.6V334.1Z" fill="#2bb1ff"/>
<path d="M683.2 327.3L693.8 317.4L697.8 321.2L705.6 313.9L702.4 310.9L711.3 310.6L711 319.6L708.2 316.9L697.7 327L693.8 323.3L686.2 330.4Z" fill="#9ccc1f"/>
<path d="M705.6 313.9L708.2 316.9L707.2 317.8L704.6 314.8Z" fill="#6f8f2a"/></svg>
<svg class="a" style="left:685px;top:358px;" width="27" height="23" viewBox="685 358 27 23" preserveAspectRatio="none"><rect x="688.1" y="372" width="5.4" height="7.4" rx=".6" fill="#7ad03a"/><rect x="688.1" y="372" width="1.4" height="7.4" fill="#66bb2e"/>
<rect x="695.3" y="366.2" width="5.4" height="13.2" rx=".6" fill="#ffe033"/><rect x="695.3" y="366.2" width="1.4" height="13.2" fill="#f2c81e"/>
<rect x="702.3" y="359.9" width="6.1" height="19.5" rx=".7" fill="#ff7033"/><rect x="702.3" y="359.9" width="1.5" height="19.5" fill="#ee5a22"/>
<rect x="686.3" y="379" width="23.9" height="1" fill="#7cc840"/></svg>
<svg class="a" style="left:966.2px;top:308.3px;" width="27" height="23" viewBox="685 358 27 23" preserveAspectRatio="none"><rect x="688.1" y="372" width="5.4" height="7.4" rx=".6" fill="#7ad03a"/><rect x="688.1" y="372" width="1.4" height="7.4" fill="#66bb2e"/>
<rect x="695.3" y="366.2" width="5.4" height="13.2" rx=".6" fill="#ffe033"/><rect x="695.3" y="366.2" width="1.4" height="13.2" fill="#f2c81e"/>
<rect x="702.3" y="359.9" width="6.1" height="19.5" rx=".7" fill="#ff7033"/><rect x="702.3" y="359.9" width="1.5" height="19.5" fill="#ee5a22"/>
<rect x="686.3" y="379" width="23.9" height="1" fill="#7cc840"/></svg>
<svg class="a" style="left:680px;top:401px;" width="36" height="30" viewBox="680 401 36 30" preserveAspectRatio="none"><path d="M688.2 417.6V406.2A3.9 3.9 0 0 1 696 406.2V417.6A7.6 7.6 0 1 1 688.2 417.6Z" fill="#eaf6fb" stroke="#2a86a6" stroke-width="1"/>
<circle cx="692.1" cy="423.6" r="5.6" fill="#00b0ff"/><rect x="690.3" y="404.4" width="3.6" height="17" rx="1.6" fill="#00b0ff"/><rect x="690.3" y="404.4" width="3.6" height="5.6" rx="1.6" fill="#62cfff"/>
<path d="M681 404.4H685M682 407.1H685M681 409.8H685M682 412.5H685M681 415.2H685M682.4 418.3H685" stroke="#86bccb" stroke-width=".8"/>
<path d="M710.3 409.4A5.1 5.7 0 1 0 710.3 416.2" fill="none" stroke="#2a86a6" stroke-width="1.15"/><circle cx="712.9" cy="408.5" r="1.3" fill="none" stroke="#2a86a6" stroke-width=".7"/></svg>
<svg class="a" style="left:1121px;top:306px;" width="36" height="30" viewBox="680 401 36 30" preserveAspectRatio="none"><path d="M688.2 417.6V406.2A3.9 3.9 0 0 1 696 406.2V417.6A7.6 7.6 0 1 1 688.2 417.6Z" fill="#eaf6fb" stroke="#2a86a6" stroke-width="1"/>
<circle cx="692.1" cy="423.6" r="5.6" fill="#00b0ff"/><rect x="690.3" y="404.4" width="3.6" height="17" rx="1.6" fill="#00b0ff"/><rect x="690.3" y="404.4" width="3.6" height="5.6" rx="1.6" fill="#62cfff"/>
<path d="M681 404.4H685M682 407.1H685M681 409.8H685M682 412.5H685M681 415.2H685M682.4 418.3H685" stroke="#86bccb" stroke-width=".8"/>
<path d="M710.3 409.4A5.1 5.7 0 1 0 710.3 416.2" fill="none" stroke="#2a86a6" stroke-width="1.15"/><circle cx="712.9" cy="408.5" r="1.3" fill="none" stroke="#2a86a6" stroke-width=".7"/></svg>
<svg class="a" style="left:279px;top:460px;" width="32" height="30" viewBox="279 460 32 30" preserveAspectRatio="none"><g fill="#0a0a0a"><path d="M280.3 470H290.6L294 484.6H283.9Z"/><path d="M294 474.9H301.2L303.1 485.5H295.9Z"/><path d="M304.2 480H308L309.7 486.5H305.4Z" fill="#2a2a2a"/>
<path d="M287 485L289.2 488.9H284.8Z" fill="#444"/><path d="M298.5 486L300.2 489H296.8Z" fill="#444"/><path d="M306.7 486.8L307.8 489H305.6Z" fill="#555"/></g>
<g stroke="#eef2fb" stroke-width=".8" fill="none"><path d="M283.7 470L287.2 484.6M287.2 470L290.7 484.6M281.4 474.8H291.8M282.6 479.7H292.9"/>
<path d="M296.4 474.9L298.3 485.5M298.8 474.9L300.7 485.5M294.6 478.4H301.9M295.3 482H302.5"/><path d="M306 480L307.4 486.5M304.8 483.2H309" stroke-width=".6"/></g>
<g stroke="#2b2b2b" stroke-width="1" fill="none"><circle cx="304.2" cy="466.4" r="1.9"/><path d="M304.2 460.8V463.4M304.2 469.4V472M298.6 466.4H301.2M307.2 466.4H309.8M300.3 462.5L302.1 464.3M306.3 468.5L308.1 470.3M308.1 462.5L306.3 464.3M302.1 468.5L300.3 470.3"/></g></svg>
<svg class="a" style="left:1299px;top:259px;" width="37" height="31" viewBox="0 0 37 31" preserveAspectRatio="none"><ellipse cx="18.5" cy="15.5" rx="17.3" ry="14.3" fill="#e6e7f6" stroke="#f6d873" stroke-width="1.6"/>
<path d="M7.2 12.8C9.4 5.6 13 5.6 16.4 10.6C19.8 15.6 23.4 15.6 27.6 10.2" fill="none" stroke="#8e4fd6" stroke-width="1.4" stroke-linecap="round"/>
<text x="18.3" y="24.6" font-family="Liberation Sans" font-size="7.6" font-weight="700" fill="#4a6fe0" text-anchor="middle" letter-spacing="0.9">AC</text></svg>
<svg class="a" style="left:958px;top:357px;" width="316" height="77" viewBox="958 357 316 77" preserveAspectRatio="none"><defs><clipPath id="ivf"><path d="M1053.8 362L1239 364.2V430.8L1020.6 419.6Z"/></clipPath>
<linearGradient id="ivg" x1="0" y1="0" x2="1" y2="0"><stop offset="0" stop-color="#0b0d16"/><stop offset=".35" stop-color="#141824"/><stop offset="1" stop-color="#161a26"/></linearGradient></defs>
<path d="M961.6 362.2Q961.8 360.4 964 360.4L1239 364V431L962.4 417Q960.4 416.8 960.5 414.8Z" fill="#3a3f51"/>
<path d="M1053.8 362L1239 364.2V430.8L1020.6 419.6Z" fill="url(#ivg)"/>
<g clip-path="url(#ivf)" fill="none" stroke="#3b4052" stroke-width="1"><path d="M1018.6 362.5L1018.6 418.4M1030.2 362.6L1030.2 419.0M1041.8 362.8L1041.8 419.6M1053.4 362.9L1053.4 420.2M1065.0 363.1L1065.0 420.8M1076.6 363.2L1076.6 421.4M1088.2 363.4L1088.2 422.0M1099.8 363.5L1099.8 422.6M1111.4 363.6L1111.4 423.2M1123.0 363.8L1123.0 423.8M1134.6 363.9L1134.6 424.4M1146.2 364.1L1146.2 425.0M1157.8 364.2L1157.8 425.6M1169.4 364.3L1169.4 426.2M1181.0 364.5L1181.0 426.8M1192.6 364.6L1192.6 427.4M1204.2 364.8L1204.2 428.0M1215.8 364.9L1215.8 428.6M1227.4 365.1L1227.4 429.2"/><path d="M1018 369.8L1239 373.7M1018 378.0L1239 383.2M1018 386.3L1239 392.7M1018 394.6L1239 402.3M1018 402.8L1239 411.8M1018 411.1L1239 421.3" stroke="#343949"/></g>
<path d="M964 360.9L1100 361.6L1239 364.2" fill="none" stroke="#c5c9d6" stroke-width="1"/><path d="M964 360.9L1020 361.2" fill="none" stroke="#3a3f51" stroke-width="1.1"/>
<path d="M960.8 416.6L1239 431" fill="none" stroke="#262a38" stroke-width="1.6"/>
<path d="M1239 364.2L1271.8 366.8V423.8L1239 430.8Z" fill="#10131d"/>
<g fill="none" stroke="#2c3040" stroke-width=".7"><path d="M1243.0 365.5L1243.0 428.9M1246.6 365.8L1246.6 428.2M1250.2 366.1L1250.2 427.4M1253.8 366.4L1253.8 426.6M1257.4 366.7L1257.4 425.9M1261.0 367.0L1261.0 425.1M1264.6 367.2L1264.6 424.3M1268.2 367.5L1268.2 423.6"/><path d="M1240 369.8L1271.8 371.6M1240 375.3L1271.8 376.3M1240 380.9L1271.8 381.1M1240 386.4L1271.8 385.8M1240 391.9L1271.8 390.6M1240 397.5L1271.8 395.3M1240 403.1L1271.8 400.1M1240 408.6L1271.8 404.8M1240 414.1L1271.8 409.6M1240 419.7L1271.8 414.3M1240 425.2L1271.8 419.1"/></g>
<path d="M1239 364.4V430.8" stroke="#5d6274" stroke-width="1.8"/><path d="M1271.4 367V423.8" stroke="#3a3f51" stroke-width="1"/>
<path d="M1239 364.2L1271.8 366.8" stroke="#6a6f82" stroke-width=".9"/>
<rect x="973.3" y="372.9" width="15.5" height="7.2" rx=".8" fill="#4f86a8"/><rect x="983.6" y="372.9" width="5.2" height="7.2" fill="#8a7fc0"/>
<path d="M975 374V379M977.8 374V379M980.6 374V379M983.4 374V379M986.4 374V379" stroke="#cfe0ee" stroke-width="1"/>
<rect x="990.2" y="372.9" width="17.8" height="7.6" rx=".8" fill="#c8323f"/><path d="M992.6 374.2V379.2M996.4 374.2V379.2M999.4 374.2V379.2M1002.2 374.2V379.2M1004.8 374.2V379.2" stroke="#f3b8bc" stroke-width="1"/>
<rect x="972.8" y="385.4" width="30.8" height="8.5" rx=".8" fill="#4fc22e"/><path d="M975.6 386.8V392.6M979.4 386.8V392.6M983 386.8V392.6M986.8 386.8V392.6M991 386.8V392.6M994.6 386.8V392.6M998.6 386.8V392.6" stroke="#c8f2a8" stroke-width="1.2"/>
<text x="973.3" y="407.6" font-family="Liberation Sans" font-size="7" fill="#e4e6ee" textLength="12">266</text>
<path d="M997.2 402H1000.2L998.6 408H997Z" fill="#f08a24"/><rect x="1002.6" y="402" width="3.6" height="6" rx=".5" fill="#f5a536"/><rect x="1003.8" y="403.4" width="1.1" height="3.2" fill="#c96a10"/>
<path d="M1025 389.4L1030.2 391.7L1025 394L1026.4 391.7Z" fill="#c9ccd6"/>
<path d="M965 367.4H968.6M965 370.4H967.4" stroke="#6e7386" stroke-width=".7"/>
<rect x="1047.6" y="390" width="1.8" height="5.6" fill="#2a2f3f"/></svg>
</div>
</body></html>
